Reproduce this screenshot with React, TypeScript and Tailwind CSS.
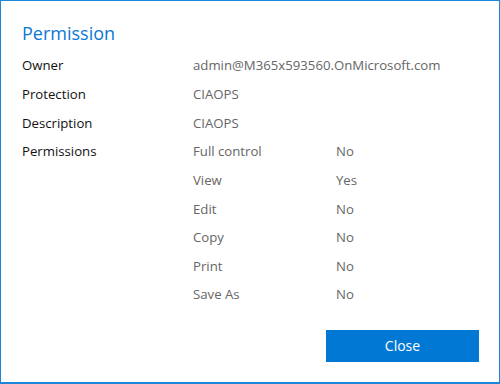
import React from "react";

const perms: [string, string][] = [
  ["Full control", "No"],
  ["View", "Yes"],
  ["Edit", "No"],
  ["Copy", "No"],
  ["Print", "No"],
  ["Save As", "No"],
];

export default function App() {
  const font = { fontFamily: '"Open Sans", "Noto Sans", sans-serif' };
  return (
    <div className="w-[500px] h-[384px] bg-white border border-[#1e86d8] border-b-[2px] border-b-[#1e86d8] shadow-[0_1px_0_#1b3b5e] flex flex-col" style={font}>
      <div className="pl-[21px] pt-[19px] h-[51px] text-[18px] leading-[26px] text-[#0a78d4]">Permission</div>
      <div className="pl-[21px] flex flex-col text-[13.2px]">
        {[
          ["Owner", "admin@M365x593560.OnMicrosoft.com"],
          ["Protection", "CIAOPS"],
          ["Description", "CIAOPS"],
        ].map(([k, v]) => (
          <div key={k} className="flex items-center h-[28.625px]">
            <div className="w-[171px] text-[#111111]">{k}</div>
            <div className="text-[#666666]">{v}</div>
          </div>
        ))}
        <div className="flex">
          <div className="w-[171px] h-[28.625px] flex items-center text-[#111111]">Permissions</div>
          <div className="flex flex-col">
            {perms.map(([k, v]) => (
              <div key={k} className="flex items-center h-[28.625px] text-[#666666]">
                <div className="w-[143px]">{k}</div>
                <div>{v}</div>
              </div>
            ))}
          </div>
        </div>
      </div>
      <div className="flex justify-end pr-[20px] mt-[20px]">
        <button className="w-[153px] h-[32px] bg-[#0078d4] text-white text-[14px] flex items-center justify-center">Close</button>
      </div>
    </div>
  );
}
